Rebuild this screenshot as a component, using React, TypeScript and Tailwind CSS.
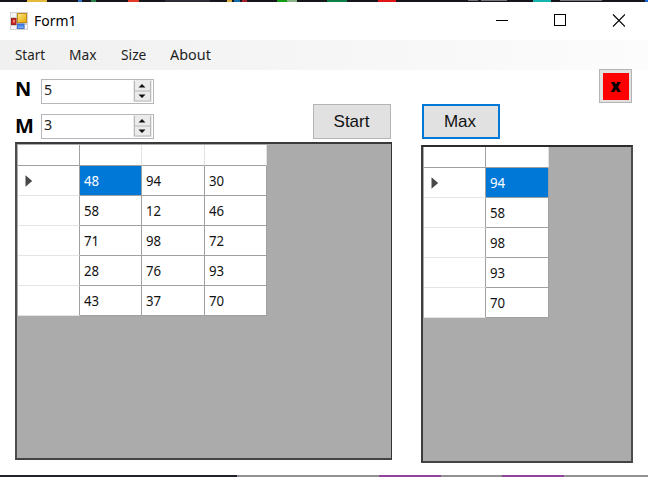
import type { ReactNode } from "react";

const matrix = [
  [48, 94, 30],
  [58, 12, 46],
  [71, 98, 72],
  [28, 76, 93],
  [43, 37, 70],
];
const maxima = matrix.map((row) => [Math.max(...row)]);

function TaskbarTop() {
  return (
    <div className="flex h-[2px] overflow-hidden bg-[#17151c]">
      <i className="ml-[27px] h-full w-[20px] bg-[#e4b93c]" />
      <i className="ml-[31px] h-full w-[4px] bg-[#3472c8]" />
      <i className="ml-[9px] h-full w-[5px] bg-[#288144]" />
      <i className="ml-[32px] h-full w-[11px] bg-[#e43927]" />
      <i className="ml-[26px] h-full w-[45px] bg-[#2e2b35]" />
      <i className="ml-[17px] h-full w-[5px] bg-[#d8a83a]" />
      <i className="ml-[2px] h-full w-[6px] bg-[#126da8]" />
      <i className="ml-[2px] h-full w-[5px] bg-[#a51c2b]" />
      <i className="ml-[30px] h-full w-[10px] bg-[#139c16]" />
      <i className="h-full w-[10px] bg-[#8ab487]" />
      <i className="ml-[30px] h-full w-[20px] bg-[#0d8048]" />
      <i className="ml-[31px] h-full w-[18px] bg-[#e01515]" />
      <i className="ml-[72px] h-[1px] w-[10px] bg-[#77757a]" />
      <i className="ml-[3px] h-[1px] w-[26px] bg-[#77757a]" />
      <i className="ml-[26px] h-full w-[18px] bg-[#15b5ad]" />
      <i className="ml-[9px] h-[1px] w-[42px] bg-[#77757a]" />
      <i className="ml-auto h-full w-[3px] bg-[#1769e0]" />
    </div>
  );
}

function AppIcon() {
  return (
    <svg className="-mt-px ml-[10px] h-[18px] w-[18px]" viewBox="0 0 18 18">
      <defs>
        <linearGradient id="gold" x2="1" y2="1">
          <stop stopColor="#ffe88a" />
          <stop offset="1" stopColor="#e6a800" />
        </linearGradient>
        <linearGradient id="azure" x2="0" y2="1">
          <stop stopColor="#2f6fd8" />
          <stop offset="1" stopColor="#8ab8ff" />
        </linearGradient>
      </defs>
      <rect width="18" height="18" fill="#d2d2d2" />
      <path d="M1 1h5v4H1zM1 14h5v3H1zM15 13h2v4h-2z" fill="#f5f5f5" />
      <rect x="7.5" y="1.5" width="9" height="9" fill="url(#gold)" stroke="#bd8c14" />
      <rect x="1.5" y="6.5" width="4.5" height="6" fill="#c92a24" stroke="#98231e" />
      <rect x="3" y="8" width="2" height="2.5" fill="#f08075" />
      <rect x="7.5" y="12" width="6.5" height="4.5" fill="url(#azure)" stroke="#3f75cd" />
    </svg>
  );
}

function TitleBar() {
  return (
    <div className="flex h-[38px] items-center bg-white pr-[23px]">
      <AppIcon />
      <span className="-mt-[2px] ml-[6px] origin-left scale-x-[0.93] text-[15px] leading-[20px] text-black">Form1</span>
      <svg className="-mt-px ml-auto h-[13px] w-[129px]" viewBox="0 0 129 13" fill="none" stroke="#000" shapeRendering="crispEdges">
        <path d="M0 6.5h12M58.5.5h11v11h-11z" />
        <path d="M117 .5l12 12M129 .5l-12 12" shapeRendering="auto" strokeWidth="1.1" />
      </svg>
    </div>
  );
}

function MenuBar() {
  return (
    <div className="flex h-[30px] items-center bg-linear-to-r from-[#f0f0f0] to-[#fcfcfc] pb-[2px] pl-[15px] text-[15px] text-[#1e1e1e]">
      <span className="w-[54px] origin-left scale-x-[0.89]">Start</span>
      <span className="w-[52px] origin-left scale-x-[0.92]">Max</span>
      <span className="w-[49px] origin-left scale-x-[0.92]">Size</span>
      <span className="origin-left scale-x-[0.96]">About</span>
    </div>
  );
}

function Spinner({ label, value, labelClass }: { label: string; value: number; labelClass: string }) {
  return (
    <div className="flex h-[25px] w-[139px] items-start">
      <span className={`w-[26px] text-[20px] leading-[20px] font-bold text-black ${labelClass}`}>{label}</span>
      <div className="flex h-[25px] w-[113px] justify-between border border-[#b6b6bd] bg-white pr-px">
        <span className="ml-[2px] origin-left scale-x-[0.95] text-[15px] leading-[19px] text-[#222]">{value}</span>
        <svg className="h-[22px] w-[19px]" viewBox="0 0 19 22">
          <rect width="19" height="22" fill="#ebebeb" />
          <path d="M1.5 1v20h16V1M1.5 11h16" fill="none" stroke="#b8b8b8" />
          <path d="M5.5 7.5L9 4l3.5 3.5zM5.5 14.5H12.5L9 18z" fill="#111" />
        </svg>
      </div>
    </div>
  );
}

function Button({ focused, children }: { focused?: boolean; children: ReactNode }) {
  return (
    <button
      className={`flex h-[35px] w-[78px] items-center justify-center bg-[#e1e1e1] pt-px font-['Liberation_Sans',sans-serif] text-[17px] text-[#111] ${
        focused ? "border-2 border-[#0078d7] pr-[2px]" : "border border-[#b4b4b4] pr-px"
      }`}
    >
      {children}
    </button>
  );
}

function DataGrid({ rows, className, columns }: { rows: number[][]; className: string; columns: string }) {
  return (
    <div className={`bg-[#ababab] ${className}`}>
      <div className={`grid w-max bg-white ${columns}`}>
        <div className="border-r border-b border-[#a0a0a0]" />
        {rows[0].map((_, i) => (
          <div key={i} className="border-r border-b border-r-[#e2e2e2] border-b-[#a0a0a0]" />
        ))}
        {rows.map((row, r) => [
          <div key={`h${r}`} className="flex items-center border-r border-b border-r-[#a0a0a0] border-b-[#e4e4e4] pl-[7px]">
            {r === 0 && (
              <svg className="mt-px h-[12px] w-[8px]" viewBox="0 0 8 12">
                <path d="M.5 .2v11.6L7.2 6z" fill="#484848" />
              </svg>
            )}
          </div>,
          ...row.map((n, c) => (
            <div
              key={`${r}-${c}`}
              className={`flex items-center border-r border-b border-[#a0a0a0] pb-[2px] pl-[4px] text-[15px] leading-[20px] ${
                r === 0 && c === 0 ? "bg-[#0078d7] text-white" : "text-[#111]"
              }`}
            >
              <span className="origin-left scale-x-[0.88]">{n}</span>
            </div>
          )),
        ])}
      </div>
    </div>
  );
}

function TaskbarBottom() {
  return (
    <div className="flex h-[2px] bg-[#929292]">
      <i className="h-full w-[237px] bg-[#202329]" />
      <i className="ml-[142px] h-full w-[62px] bg-[#8e4498]" />
      <i className="ml-[61px] h-full w-[62px] bg-[#8e4498]" />
    </div>
  );
}

export default function App() {
  return (
    <div className="flex h-[477px] w-[648px] flex-col overflow-hidden bg-white font-['Noto_Sans','Open_Sans',sans-serif]">
      <TaskbarTop />
      <TitleBar />
      <MenuBar />
      <main className="flex h-[405px] gap-[30px] pl-[15px]">
        <section className="w-[376px]">
          <div className="flex h-[72px] justify-between pt-[9px]">
            <div className="flex flex-col gap-[10px]">
              <Spinner label="N" value={5} labelClass="" />
              <Spinner label="M" value={3} labelClass="pt-[2px]" />
            </div>
            <div className="pt-[25px]">
              <Button>Start</Button>
            </div>
          </div>
          <DataGrid
            rows={matrix}
            className="h-[318px] w-[377px] border-t-2 border-r border-b-2 border-l-2 border-t-[#3a3a3c] border-r-[#333] border-b-[#444446] border-l-[#4a4c50] pt-px pl-px"
            columns="grid-cols-[62px_62px_63px_62px] grid-rows-[21px_repeat(5,30px)]"
          />
        </section>
        <section className="w-[212px]">
          <div className="flex h-[75px] items-start justify-between pr-px pl-px">
            <div className="pt-[34px]">
              <Button focused>Max</Button>
            </div>
            <button className="-mt-px flex h-[34px] w-[33px] items-center justify-center border border-[#b4b4b4] bg-[#e1e1e1] p-[2px]">
              <span className="flex h-[27px] w-[26px] items-center justify-center bg-[#ff0000] pb-[3px] text-[18px] leading-[20px] font-black text-black">
                <b className="scale-x-[0.9]">x</b>
              </span>
            </button>
          </div>
          <DataGrid
            rows={maxima}
            className="h-[318px] w-[212px] border-2 border-t-[#2c2c2e] border-r-[#4a4c50] border-b-[#444446] border-l-[#3c3c3e] pl-px"
            columns="grid-cols-[62px_63px] grid-rows-[21px_repeat(5,30px)]"
          />
        </section>
      </main>
      <TaskbarBottom />
    </div>
  );
}
